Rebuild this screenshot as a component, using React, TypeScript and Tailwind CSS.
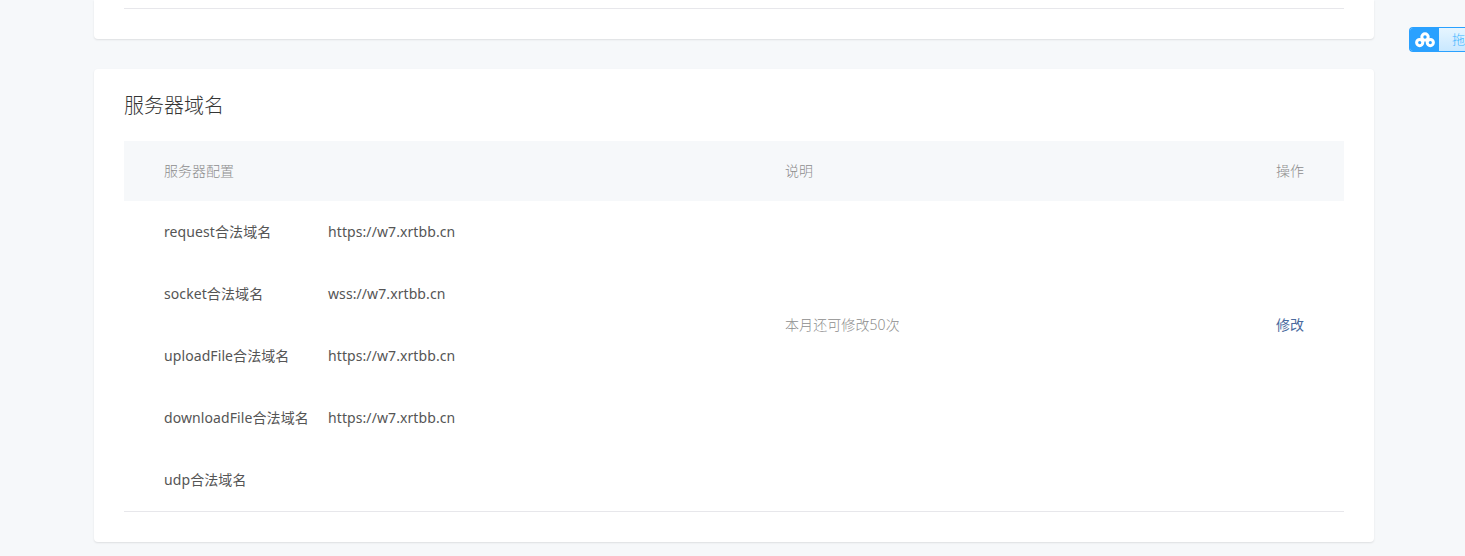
import React from 'react';

const font = "font-['Noto_Sans','Noto_Sans_CJK_SC',sans-serif]";

const domains = [
  { label: 'request合法域名', value: 'https://w7.xrtbb.cn' },
  { label: 'socket合法域名', value: 'wss://w7.xrtbb.cn' },
  { label: 'uploadFile合法域名', value: 'https://w7.xrtbb.cn' },
  { label: 'downloadFile合法域名', value: 'https://w7.xrtbb.cn' },
  { label: 'udp合法域名', value: '' },
];

const CloudLogo = () => (
  <svg width="20" height="16" viewBox="0 0 20 16" fill="none" stroke="white" strokeWidth="3">
    <circle cx="10" cy="5" r="3.2" />
    <circle cx="4.7" cy="10.6" r="3.1" />
    <circle cx="15.3" cy="10.6" r="3.1" />
  </svg>
);

export default function App() {
  return (
    <div className={`relative h-[556px] overflow-hidden bg-[#f6f8fa] ${font}`}>
      <div className="ml-[94px] w-[1280px]">
        {/* tail of the previous card */}
        <div className="rounded-b bg-white px-[30px] pt-2 pb-[30px] shadow-[0_1px_2px_rgba(0,0,0,0.1)]">
          <div className="border-t border-[#e7e7eb]" />
        </div>

        <div className="mt-[30px] rounded bg-white px-[30px] pb-[30px] shadow-[0_1px_2px_rgba(0,0,0,0.1)]">
          <h2 className="flex h-[72px] items-center pt-[2px] text-[20px] font-light text-[#353535]">服务器域名</h2>

          <div className="border-b border-[#e7e7eb]">
            <div className="flex h-[60px] items-center bg-[#f6f8fa] px-10 pb-[2px] text-[14px] font-light text-[#8d8d8d]">
              <div className="w-[621px]">服务器配置</div>
              <div className="flex-1">说明</div>
              <div>操作</div>
            </div>

            <div className="flex items-center px-10 text-[14px]">
              <div className="w-[621px] tracking-[0.09px]">
                {domains.map((d) => (
                  <div key={d.label} className="flex h-[62px] items-center pb-[2px] text-[#555555]">
                    <div className="w-[164px]">{d.label}</div>
                    <div>{d.value}</div>
                  </div>
                ))}
              </div>
              {/* these two sit one row above the middle of the domain list */}
              <div className="mb-[64px] flex-1 font-light tracking-[0.09px] text-[#8d8d8d]">本月还可修改50次</div>
              <a className="mb-[64px] text-[#4a6a9e]">修改</a>
            </div>
          </div>
        </div>
      </div>

      {/* floating drag widget, runs off the window edge */}
      <div className="absolute top-[27px] left-[1409px] flex h-[25px] w-[56px] overflow-hidden rounded-l-[4px] border-y border-l border-[#2aa1ff] bg-gradient-to-b from-[#e6f5ff] to-[#c9e8ff]">
        <div className="flex w-[29px] shrink-0 items-center justify-center bg-[#2aa1ff]">
          <CloudLogo />
        </div>
        <div className="pl-[13px] text-[13px] leading-[23px] font-light text-[#3db5ff]">拖</div>
      </div>
    </div>
  );
}
